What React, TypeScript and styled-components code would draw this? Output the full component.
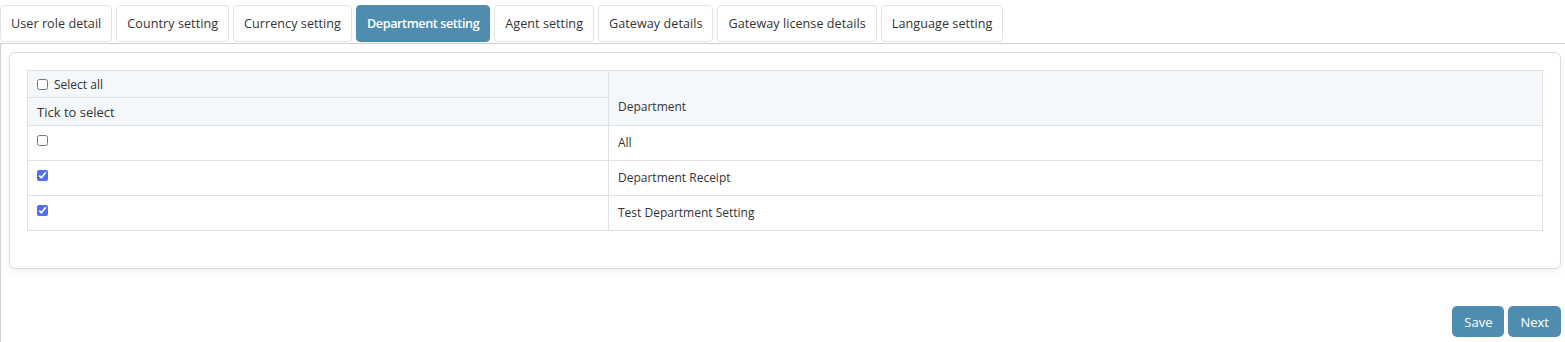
import React from 'react'
import styled, { createGlobalStyle } from 'styled-components'

const tabs = [
    'User role detail',
    'Country setting',
    'Currency setting',
    'Department setting',
    'Agent setting',
    'Gateway details',
    'Gateway license details',
    'Language setting',
]

const departments = [
    { name: 'All', checked: false },
    { name: 'Department Receipt', checked: true },
    { name: 'Test Department Setting', checked: true },
]

const GlobalStyle = createGlobalStyle`
    body {
        margin: 0;
        background: #fff;
        font-family: 'Open Sans', 'Noto Sans', sans-serif;
        color: #333;
    }
`

export default function App(): JSX.Element {
    return (
        <Page>
            <GlobalStyle />
            <TabBar>
                {tabs.map((t) => (
                    <Tab key={t} active={t === 'Department setting'}>
                        {t}
                    </Tab>
                ))}
            </TabBar>
            <Panel>
                <Card>
                    <Table>
                        <thead>
                            <tr>
                                <HeadCell>
                                    <SelectAll>
                                        <Check type="checkbox" readOnly />
                                        Select all
                                    </SelectAll>
                                </HeadCell>
                                <HeadCell rowSpan={2} wide>
                                    Department
                                </HeadCell>
                            </tr>
                            <tr>
                                <HeadCell tall>Tick to select</HeadCell>
                            </tr>
                        </thead>
                        <tbody>
                            {departments.map((d) => (
                                <tr key={d.name}>
                                    <Cell>
                                        <Check
                                            type="checkbox"
                                            defaultChecked={d.checked}
                                        />
                                    </Cell>
                                    <Cell>
                                        <Label>{d.name}</Label>
                                    </Cell>
                                </tr>
                            ))}
                        </tbody>
                    </Table>
                </Card>
                <Actions>
                    <Button>Save</Button>
                    <Button>Next</Button>
                </Actions>
            </Panel>
        </Page>
    )
}

const Page = styled.div`
    width: 1565px;
    height: 342px;
    overflow: hidden;
`

const TabBar = styled.div`
    display: flex;
    gap: 4px;
    padding-top: 5px;
    padding-bottom: 1px;
    border-bottom: 1px solid #d0d0d0;
`

const Tab = styled.div<{ active?: boolean }>`
    display: flex;
    align-items: center;
    height: 37px;
    box-sizing: border-box;
    padding: 0 10px;
    font-size: 12.6px;
    font-weight: ${(p) => (p.active ? 600 : 400)};
    letter-spacing: ${(p) => (p.active ? '-0.4px' : '0.05px')};
    color: ${(p) => (p.active ? '#fff' : '#333')};
    background: ${(p) => (p.active ? '#4f8db0' : '#fff')};
    border: 1px solid ${(p) => (p.active ? '#4f8db0' : '#e3e3e3')};
    border-radius: 4px;
    white-space: nowrap;
`

const Panel = styled.div`
    border-left: 1px solid #d0d0d0;
    padding: 8px 4px 0 8px;
    height: 300px;
`

const Card = styled.div`
    border: 1px solid #dcdcdc;
    border-radius: 6px;
    padding: 17px 17px 37px 17px;
    box-shadow: 0 3px 8px rgba(0, 0, 0, 0.05);
    background: #fff;
`

const Table = styled.table`
    width: 100%;
    border-collapse: collapse;
    font-size: 12px;
`

const HeadCell = styled.th<{ wide?: boolean; tall?: boolean }>`
    background: #f5f8fb;
    border: 1px solid #dee2e6;
    text-align: left;
    font-weight: 400;
    font-size: ${(p) => (p.tall ? '13px' : '12px')};
    color: #333;
    padding: ${(p) => (p.wide ? '0 9px 10px' : '0 9px')};
    height: ${(p) => (p.tall ? '27px' : '26px')};
    width: ${(p) => (p.wide ? 'auto' : '562px')};
    vertical-align: ${(p) => (p.wide ? 'bottom' : 'middle')};
`

const SelectAll = styled.label`
    display: flex;
    align-items: center;
    gap: 6px;
`

const Cell = styled.td`
    border: 1px solid #dee2e6;
    padding: 0 9px;
    height: 34px;
    vertical-align: top;
    color: #333;
`

const Label = styled.div`
    padding-top: 8px;
`

const Check = styled.input`
    width: 11px;
    height: 11px;
    margin: 9px 0 0 0;
    accent-color: #4d6ff0;
    ${SelectAll} & {
        margin: 0;
    }
`

const Actions = styled.div`
    display: flex;
    justify-content: flex-end;
    gap: 4px;
    margin-top: 37px;
`

const Button = styled.button`
    height: 31px;
    padding: 0 12px;
    border: none;
    border-radius: 5px;
    background: #4f8db0;
    color: #fff;
    font-family: inherit;
    font-size: 13px;
    font-weight: 500;
`
